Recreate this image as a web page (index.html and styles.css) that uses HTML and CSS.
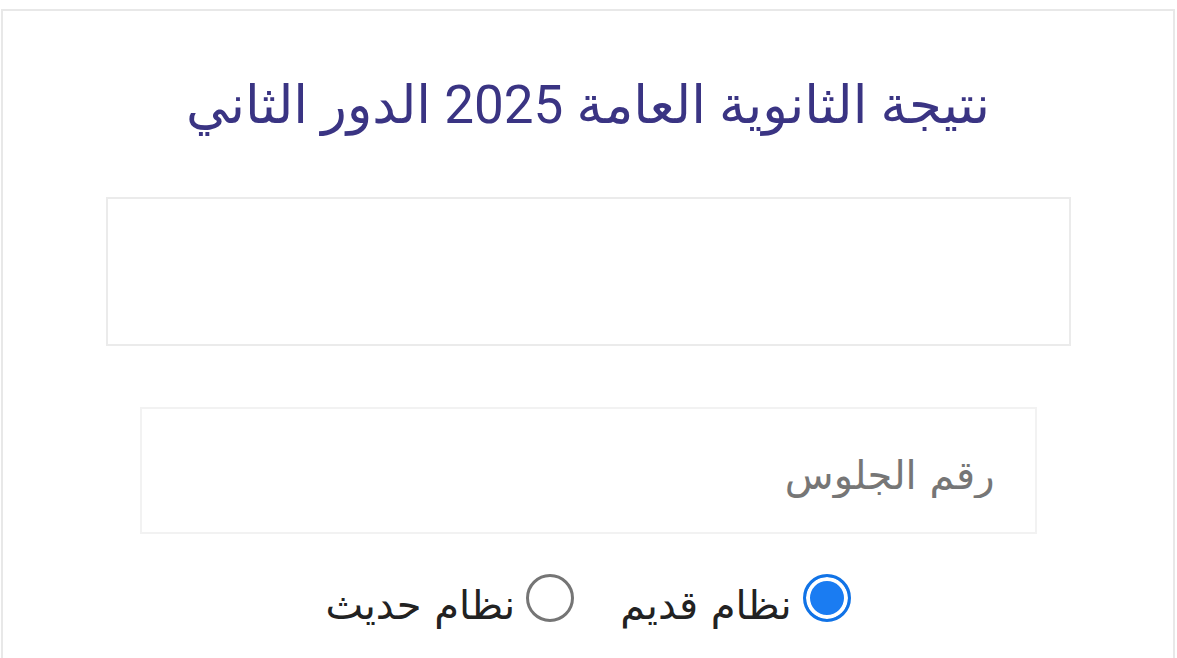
FILE: index.html
```html
<!DOCTYPE html>
<html lang="ar" dir="rtl">
<head>
    <meta charset="UTF-8">
    <meta name="viewport" content="width=device-width, initial-scale=1">
    <title>نتيجة الثانوية العامة 2025</title>
    <link rel="stylesheet" href="styles.css">
</head>
<body>
    <div class="card">
        <h1 class="title">نتيجة الثانوية العامة 2025 الدور الثاني</h1>

        <div class="result-box" id="result"></div>

        <div class="search-box">
            <input class="seat-input" type="text" id="seat-number" placeholder="رقم الجلوس">
        </div>

        <div class="radio-row">
            <label class="radio-item">
                <input class="radio" type="radio" name="system" value="old" checked>
                <span>نظام قديم</span>
            </label>
            <label class="radio-item">
                <input class="radio" type="radio" name="system" value="new">
                <span>نظام حديث</span>
            </label>
        </div>
    </div>
</body>
</html>
```

FILE: styles.css
```css
body {
    font-family: Roboto, "DejaVu Sans", sans-serif;
    background-color: #fff;
    margin: 0;
    padding: 9px 2px 0 1px;
    overflow: hidden;
}

.card {
    border: 2px solid #e8e8e8;
    border-bottom: none;
    height: calc(100vh - 9px);
    box-sizing: border-box;
}

.title {
    font-size: 53px;
    font-weight: normal;
    color: #3a3483;
    text-align: center;
    line-height: 60px;
    margin: 64px 0 0 0;
}

.result-box {
    width: 965px;
    height: 149px;
    margin: 62px auto 0 auto;
    border: 2px solid #ebebeb;
    box-sizing: border-box;
}

.search-box {
    width: 897px;
    height: 127px;
    margin: 61px auto 0 auto;
    border: 2px solid #f2f2f2;
    box-sizing: border-box;
    display: flex;
    align-items: center;
}

.seat-input {
    width: 100%;
    height: 100%;
    border: none;
    outline: none;
    background: transparent;
    padding: 8px 40px 0 40px;
    box-sizing: border-box;
    font-family: "DejaVu Sans", sans-serif;
    font-size: 40px;
    color: #333;
}

.seat-input::placeholder {
    color: #767676;
}

.radio-row {
    display: flex;
    justify-content: center;
    align-items: center;
    gap: 46px;
    margin-top: 34px;
}

.radio-item {
    display: flex;
    align-items: center;
    gap: 11px;
    font-family: "DejaVu Sans", sans-serif;
    font-size: 40px;
    color: #222;
}

.radio-item span {
    padding-top: 14px;
}

.radio {
    appearance: none;
    -webkit-appearance: none;
    width: 48px;
    height: 48px;
    margin: 0;
    border: 3px solid #757575;
    border-radius: 50%;
    box-sizing: border-box;
    background-color: #fff;
}

.radio:checked {
    border-color: #1173e6;
    background-color: #1a7cf2;
    box-shadow: inset 0 0 0 4px #fff;
}
```
